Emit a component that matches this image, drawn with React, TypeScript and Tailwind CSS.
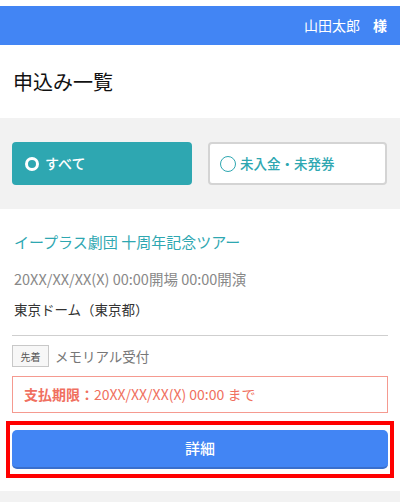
import React from "react";

export default function App() {
  return (
    <div
      className="w-[400px] h-[502px] overflow-hidden bg-white"
      style={{ fontFamily: '"Noto Sans CJK JP", "Noto Sans", sans-serif' }}
    >
      <div className="h-[6px] bg-white" />
      <header className="h-[39px] bg-[#4285f4] flex items-center justify-end pr-[13px] text-white text-[14px]">
        <span>山田太郎</span>
        <span className="ml-[13px] font-bold">様</span>
      </header>
      <div className="h-[73px] flex items-center px-[13px] text-[20px] text-[#111] font-normal">
        申込み一覧
      </div>
      <div className="bg-[#f2f2f2] h-[91px] flex items-center px-[12px] gap-[16px]">
        <button className="w-[180px] h-[43px] rounded-[4px] bg-[#2ea7b1] flex items-center pl-[13px] text-white text-[14px] font-medium">
          <span className="w-[14px] h-[14px] rounded-full border-[3.5px] border-white mr-[6px]" />
          すべて
        </button>
        <button className="w-[179px] h-[43px] rounded-[4px] bg-white border-2 border-[#d4d4d4] flex items-center pl-[10px] text-[#2ea7b1] text-[13.5px] font-medium">
          <span className="w-[16px] h-[16px] rounded-full border-[1.5px] border-[#2ea7b1] mr-[4px]" />
          未入金・未発券
        </button>
      </div>
      <div className="px-[12px] pt-[21px]">
        <div className="px-[2px] text-[15px] leading-[24px] text-[#2ea7b1]">
          イープラス劇団 十周年記念ツアー
        </div>
        <div className="px-[2px] mt-[15px] text-[14.5px] leading-[20px] text-[#888]">
          20XX/XX/XX(X) 00:00開場 00:00開演
        </div>
        <div className="px-[2px] mt-[10px] text-[13.5px] leading-[20px] text-[#333]">
          東京ドーム（東京都）
        </div>
        <div className="mt-[16px] h-[1px] bg-[#cfcfcf]" />
        <div className="mt-[9px] flex items-center">
          <span className="w-[37px] h-[22px] border border-[#c8c8c8] bg-[#f7f7f7] text-[10px] text-[#555] flex items-center justify-center">
            先着
          </span>
          <span className="ml-[6px] text-[13.5px] text-[#777]">メモリアル受付</span>
        </div>
        <div className="mt-[9px] h-[37px] border border-[#f59a90] flex items-center pl-[11px] text-[14px] text-[#f07060]">
          <span className="font-bold">支払期限：</span>
          <span>20XX/XX/XX(X) 00:00 まで</span>
        </div>
      </div>
      <div className="mx-[6px] mt-[8px] border-4 border-[#ff0000] px-[2px] py-[5px]">
        <button className="w-full h-[39px] rounded-[5px] bg-[#4285f4] border-b-2 border-[#3a6fcc] text-white text-[15px] font-medium">
          詳細
        </button>
      </div>
      <div className="mt-[13px] h-[20px] bg-[#f2f2f2]" />
    </div>
  );
}
